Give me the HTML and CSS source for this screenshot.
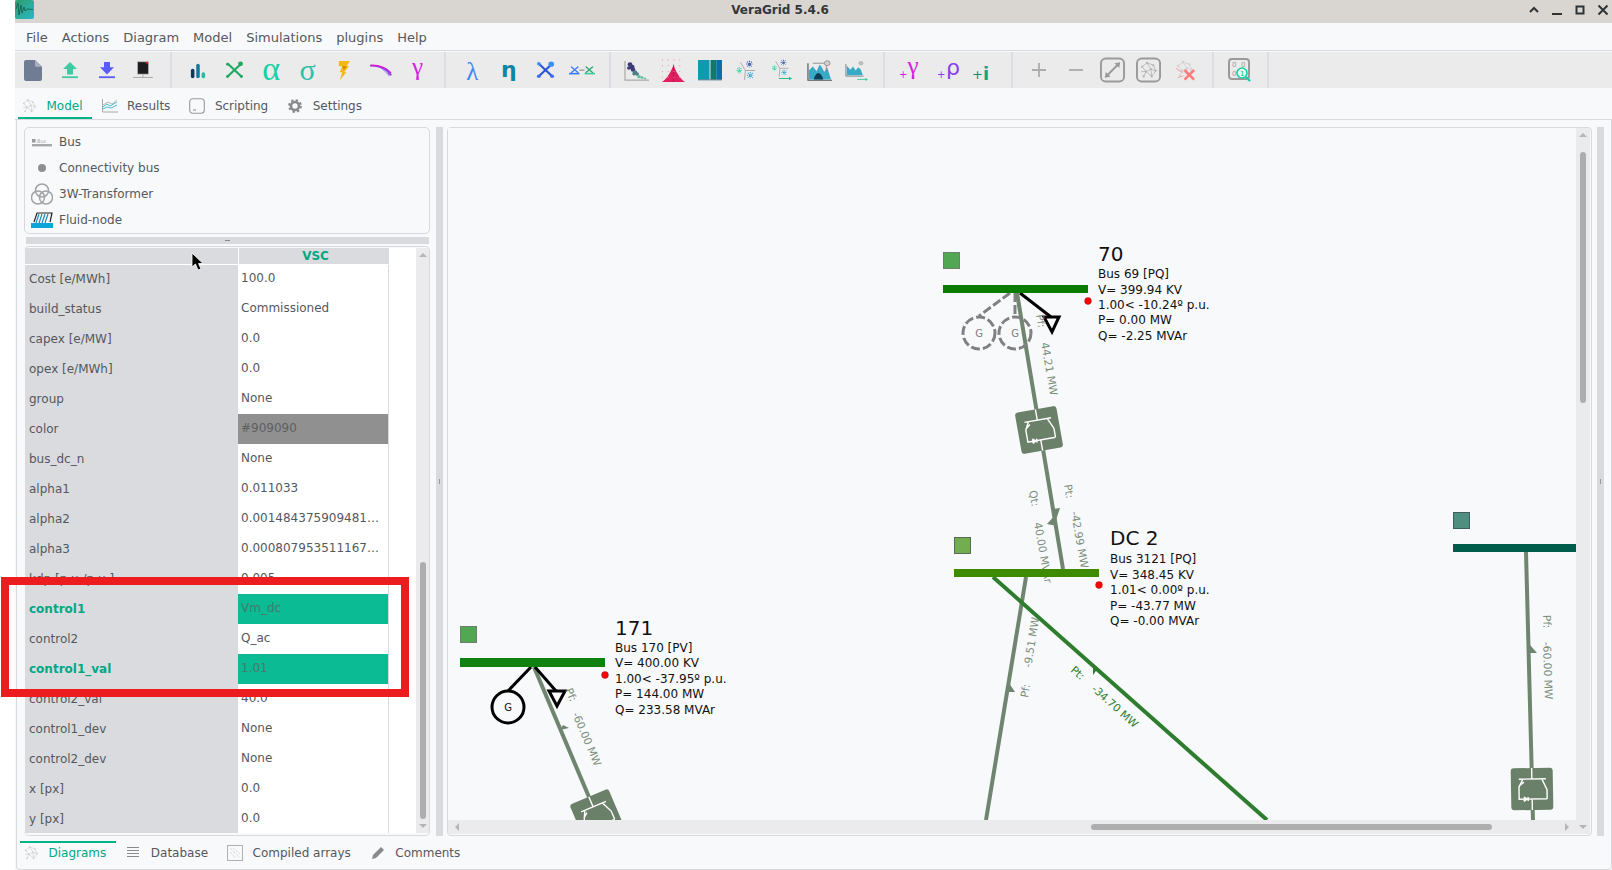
FILE: index.html
```html
<!DOCTYPE html>
<html lang="en">
<head>
    <meta charset="UTF-8">
    <title>VeraGrid 5.4.6</title>
    <link rel="stylesheet" href="styles.css">
</head>
<body>
    <svg class="defs" width="0" height="0">
        <defs>
            <symbol id="net" viewBox="0 0 24 24">
                <g fill="none" stroke="currentColor" stroke-width="1">
                    <path d="M4 8 10 3 18 6 21 13 15 11 10 3M4 8 9 14 15 11 16 20 9 14 6 20M21 13 16 20M3 14 9 14"/>
                </g>
                <g fill="currentColor">
                    <circle cx="4" cy="8" r="1.3"/><circle cx="10" cy="3" r="1.3"/><circle cx="18" cy="6" r="1.3"/>
                    <circle cx="21" cy="13" r="1.3"/><circle cx="15" cy="11" r="1.3"/><circle cx="9" cy="14" r="1.3"/>
                    <circle cx="16" cy="20" r="1.3"/><circle cx="6" cy="20" r="1.3"/>
                </g>
            </symbol>
            <symbol id="flakes" viewBox="0 0 26 26">
                <path d="M11 13 5 3M11 13 23 13M11 13 10 25" stroke="#9a9a9a" stroke-width="1" fill="none"/>
                <g stroke-width="1.3" stroke-dasharray="1.5 1" fill="none">
                    <path d="M12 5h8M16 1v8M13 2l6 6M19 2l-6 6" stroke="#2f4fa8"/>
                    <path d="M0 13h7M3.500 9v8M1 10l5 6M6 10l-5 6" stroke="#35cfa4"/>
                    <path d="M13 19h8M17 15v8M14 16l6 6M20 16l-6 6" stroke="#1fa6d8"/>
                </g>
            </symbol>
            <g id="vsc">
                <path d="M0-21V-10M-13-10H14M-9-10-13-2V10H15M10-10 15 1V10M0 10V21M-13-3-8-7M-8 8V12M-4 8V12" fill="none" stroke="#fff" stroke-width="1.400"/>
                <path d="M-8 7-4 10-8 13Z" fill="#fff"/>
            </g>
        </defs>
    </svg>

    <div class="window">
        <div class="titlebar">
            <svg class="app-icon" viewBox="0 0 19 19">
                <defs>
                    <linearGradient id="appfill" x1="0" y1="0" x2="1" y2="1">
                        <stop offset="0" stop-color="#2f9f6a"/>
                        <stop offset="1" stop-color="#29b6c6"/>
                    </linearGradient>
                </defs>
                <rect width="19" height="19" rx="2" fill="url(#appfill)"/>
                <path d="M1 9 3 3 4 15 6 5 7 13 9 7 10 11 12 9 18 9.500" fill="none" stroke="#14574a" stroke-width="0.800"/>
            </svg>
            <span class="title">VeraGrid 5.4.6</span>
            <div class="win-buttons">
                <svg viewBox="0 0 12 12"><path d="M2 8 6 4 10 8" fill="none" stroke="#2e3436" stroke-width="2"/></svg>
                <svg viewBox="0 0 12 12"><path d="M1 10H11" stroke="#2e3436" stroke-width="2"/></svg>
                <svg viewBox="0 0 12 12"><rect x="2.500" y="2.500" width="7" height="7" fill="none" stroke="#2e3436" stroke-width="2"/></svg>
                <svg viewBox="0 0 12 12"><path d="M1.500 1.500 10.500 10.500M10.500 1.500 1.500 10.500" stroke="#2e3436" stroke-width="2"/></svg>
            </div>
        </div>

        <div class="menubar">
            <span>File</span><span>Actions</span><span>Diagram</span><span>Model</span><span>Simulations</span><span>plugins</span><span>Help</span>
        </div>

        <div class="toolbar">
            <div class="tool"><svg width="18" height="21" viewBox="0 0 18 22" preserveAspectRatio="none"><path d="M2 0H11L18 7V20A2 2 0 0 1 16 22H2A2 2 0 0 1 0 20V2A2 2 0 0 1 2 0Z" fill="#707c93"/><path d="M11 0 18 7H12A1 1 0 0 1 11 6Z" fill="#a9b1c0"/></svg></div>
            <div class="tool"><svg width="16" height="18" viewBox="0 0 16 20" preserveAspectRatio="none"><path d="M8 1 15 9H11V15H5V9H1Z" fill="#3fcaa4"/><rect y="17" width="16" height="2" fill="#3fcaa4"/></svg></div>
            <div class="tool"><svg width="16" height="18" viewBox="0 0 16 20" preserveAspectRatio="none"><path d="M5 1H11V7H15L8 15 1 7H5Z" fill="#5a5cf8"/><rect y="17" width="16" height="2" fill="#5a5cf8"/></svg></div>
            <div class="tool"><svg width="20" height="18" viewBox="0 0 22 22" preserveAspectRatio="none"><rect x="5" y="1" width="12" height="15" fill="#1d1d1f" stroke="#b5b5b5" stroke-width="0.800"/><rect x="14" y="1" width="2.500" height="2" fill="#d9342b"/><path d="M11 16V20" stroke="#aaa"/><rect y="19.500" width="22" height="1.200" fill="#aaa"/></svg></div>
            <div class="sep"></div>
            <div class="tool"><svg width="16" height="17" viewBox="0 0 18 20" preserveAspectRatio="none"><rect x="1" y="8" width="4" height="11" rx="2" fill="#0d3a5c"/><rect x="7" y="2" width="4" height="17" rx="2" fill="#16789e"/><rect x="13" y="12" width="4" height="7" rx="2" fill="#2db89b"/></svg></div>
            <div class="tool"><svg width="19" height="18" viewBox="0 0 22 22" preserveAspectRatio="none"><path d="M3 3 19 19M19 3 3 19" stroke="#1fa860" stroke-width="2.400"/><circle cx="18" cy="3.500" r="2.800" fill="#1fa860"/><circle cx="3" cy="4" r="1.800" fill="#1fa860"/><circle cx="3" cy="19" r="1.800" fill="#1fa860"/><circle cx="19" cy="19" r="1.800" fill="#1fa860"/></svg></div>
            <div class="tool glyph alpha">α</div>
            <div class="tool glyph sigma">σ</div>
            <div class="tool"><svg width="12" height="19" viewBox="0 0 14 22" preserveAspectRatio="none"><path d="M1 0H14L10 6H13L7 13H10L2 22 5 13H2L5 6H1Z" fill="#f5b80f"/><path d="M5 6H10L7 10Z" fill="#c98a00"/></svg></div>
            <div class="tool"><svg width="23" height="13" viewBox="0 0 24 16" preserveAspectRatio="none"><path d="M1 2C9 2 18 4 23 14" fill="none" stroke="#a23ce6" stroke-width="2.400"/><path d="M2 1.500C10 1 17 4 23 11" fill="none" stroke="#e318c9" stroke-width="1.600"/><path d="M12 4 20 13M15 4 23 12M18 5 21 15" stroke="#6d4cf0" stroke-width="0.700"/></svg></div>
            <div class="tool glyph gamma">γ</div>
            <div class="sep"></div>
            <div class="tool glyph lambda">λ</div>
            <div class="tool glyph eta">η</div>
            <div class="tool"><svg width="19" height="18" viewBox="0 0 20 20" preserveAspectRatio="none"><path d="M3 3 17 17M17 3 3 17" stroke="#2b55d9" stroke-width="2.200"/><circle cx="16" cy="3.500" r="3" fill="#3d8ef2"/><circle cx="3" cy="3" r="2" fill="#3d8ef2"/><circle cx="3" cy="17" r="2" fill="#3d6cf2"/><circle cx="17" cy="17" r="2" fill="#3d6cf2"/></svg></div>
            <div class="tool"><svg width="26" height="11" viewBox="0 0 25 14" preserveAspectRatio="none"><path d="M2 2 9 10M9 2 2 10" stroke="#3d78f0" stroke-width="1.400"/><path d="M16 2 23 10M23 2 16 10" stroke="#1fa868" stroke-width="1.400"/><path d="M0 11H10" stroke="#3d78f0" stroke-width="2"/><path d="M15 11H25" stroke="#3fcaa4" stroke-width="2"/><path d="M10 6.500H15" stroke="#666" stroke-width="1"/></svg></div>
            <div class="sep"></div>
            <div class="tool"><svg width="25" height="21" viewBox="0 0 25 24" preserveAspectRatio="none"><path d="M1 1V23H25" fill="none" stroke="#a9a9a9" stroke-width="1.200"/><g fill="#3c3a78"><circle cx="6" cy="5" r="2.400"/><circle cx="8" cy="8" r="2.600"/><circle cx="5" cy="9" r="2"/><circle cx="9" cy="11" r="2.300"/></g><g fill="#4b7f88"><circle cx="11" cy="14" r="2.200"/><circle cx="13" cy="16" r="2"/><circle cx="10" cy="16" r="1.700"/></g><g fill="#5bc2a0"><circle cx="15" cy="19" r="1.800"/><circle cx="18" cy="20" r="1.500"/><circle cx="21" cy="21" r="1.100"/></g></svg></div>
            <div class="tool"><svg width="25" height="25" viewBox="0 0 26 26"><path d="M13 7C15 13 19 21 25 25H1C7 21 11 13 13 7Z" fill="#e21f5e"/><path d="M13 7V25" stroke="#b5184a"/><g fill="none" stroke="#ee8aa8" stroke-dasharray="1 5"><path d="M1 2H25"/><path d="M1 8H25"/><path d="M1 14H25"/><path d="M1 20H25"/></g></svg></div>
            <div class="tool"><svg width="24" height="21" viewBox="0 0 25 24" preserveAspectRatio="none"><rect width="12" height="23" fill="#0d9bb2"/><rect x="13" width="6" height="23" fill="#0e7a68"/><rect x="19" width="6" height="23" fill="#0b6ea8"/><rect y="22" width="25" height="1.200" fill="#6a8a98"/></svg></div>
            <div class="tool"><svg width="22" height="21"><use href="#flakes" width="22" height="21"/></svg></div>
            <div class="tool"><svg width="22" height="22" viewBox="0 0 26 26"><use href="#flakes" width="22" height="22"/><path d="M8 23H20" stroke="#2fb88f" stroke-width="1.200"/><path d="M20 21 24 23 20 25Z" fill="#2fb88f"/></svg></div>
            <div class="tool"><svg width="25" height="21" viewBox="0 0 26 26" preserveAspectRatio="none"><path d="M1 4V25H26" fill="none" stroke="#555" stroke-width="1.200"/><path d="M2 24V13L6 8 10 14 13 6 15 8 18 15 21 9 25 24Z" fill="#38a9c6"/><path d="M7 24C9 14 14 13 17 24Z" fill="#0c3d55"/><path d="M6 4H20V14" fill="none" stroke="#888"/><circle cx="21" cy="4" r="3" fill="#d0d0d0" stroke="#8f8f8f"/></svg></div>
            <div class="tool"><svg width="23" height="21" viewBox="0 0 26 26" preserveAspectRatio="none"><path d="M1 5V20H21" fill="none" stroke="#777"/><path d="M2 19V7L6 12 9 8 12 13 15 9 18 12 20 19Z" fill="#38a9c6"/><circle cx="18" cy="4" r="2.800" fill="#bdbdbd"/><path d="M14 24H24" stroke="#3fcaa4" stroke-width="1.200"/><path d="M23 22 26 24 23 26Z" fill="#3fcaa4"/></svg></div>
            <div class="sep"></div>
            <div class="tool"><svg width="28" height="36"><text class="pg-gamma-plus" x="2" y="26">+</text><text class="pg-gamma" x="10.500" y="22">γ</text></svg></div>
            <div class="tool"><svg width="28" height="36"><text class="pg-rho-plus" x="3" y="26">+</text><text class="pg-rho" x="12" y="23">ρ</text></svg></div>
            <div class="tool"><svg width="28" height="36"><text class="pg-i-plus" x="2" y="27">+</text><text class="pg-i" x="13" y="28">i</text></svg></div>
            <div class="sep"></div>
            <div class="tool"><svg width="14" height="14" viewBox="0 0 14 14"><path d="M7 0V14M0 7H14" stroke="#acacac" stroke-width="1.800"/></svg></div>
            <div class="tool"><svg width="14" height="14" viewBox="0 0 14 14"><path d="M0 7H14" stroke="#acacac" stroke-width="1.800"/></svg></div>
            <div class="tool"><svg width="25" height="26" viewBox="0 0 26 26"><rect x="1" y="1" width="24" height="24" rx="5" fill="none" stroke="#9a9a9a" stroke-width="2"/><path d="M7 19 19 7" stroke="#9a9a9a" stroke-width="2"/><path d="M5 21 11 20 6 15ZM21 5 15 6 20 11Z" fill="#9a9a9a"/></svg></div>
            <div class="tool"><svg class="net-box" width="25" height="26" viewBox="0 0 26 26"><rect x="1" y="1" width="24" height="24" rx="5" fill="none" stroke="#9a9a9a" stroke-width="2"/><use href="#net" x="3" y="3" width="20" height="20"/></svg></div>
            <div class="tool"><svg class="net-pale" width="21" height="22" viewBox="0 0 22 22"><use href="#net" width="20" height="20"/><path d="M10 11 20 21M20 11 10 21" stroke="#ff7b7b" stroke-width="2.600"/><path d="M1 9 8 14M3 19 9 17" stroke="#f6a0a0"/></svg></div>
            <div class="sep"></div>
            <div class="tool"><svg width="24" height="24" viewBox="0 0 24 24"><rect x="1" y="1" width="20" height="20" rx="3" fill="none" stroke="#9a9a9a" stroke-width="2"/><text class="mini" x="4" y="9">0</text><text class="mini" x="13" y="9">0</text><text class="mini" x="4" y="18">0</text><circle cx="14" cy="15" r="5" fill="#e6f8f2" stroke="#14cfa6" stroke-width="1.600"/><text class="mini mini-green" x="12" y="18">1</text><path d="M18 19 22 23" stroke="#14cfa6" stroke-width="2.400"/></svg></div>
            <div class="sep"></div>
        </div>

        <div class="tabs tabs-top">
            <div class="tab active"><svg class="tab-icon net-pale" width="16" height="16"><use href="#net"/></svg>Model</div>
            <div class="tab"><svg class="tab-icon" width="16" height="16" viewBox="0 0 16 16"><path d="M.500 1V14H16" fill="none" stroke="#a9a9a9"/><path d="M1 9 5 6 8 8 15 4M1 11 5 9 9 10 15 7" fill="none" stroke="#45bcd0"/><path d="M1 7 6 4 10 6 15 2" fill="none" stroke="#9a9a9a" stroke-width="0.700"/></svg>Results</div>
            <div class="tab"><svg class="tab-icon" width="16" height="16" viewBox="0 0 16 16"><rect x="0.700" y="0.700" width="14.600" height="14.600" rx="3" fill="none" stroke="#9a9a9a" stroke-width="1.100"/><path d="M4 12H7" stroke="#888"/></svg>Scripting</div>
            <div class="tab"><svg class="tab-icon" width="14" height="14" viewBox="0 0 14 14"><circle cx="7" cy="7" r="4" fill="none" stroke="#8a8a8a" stroke-width="2.600"/><circle cx="7" cy="7" r="5.800" fill="none" stroke="#8a8a8a" stroke-width="2.200" stroke-dasharray="2.300 2.250"/></svg>Settings</div>
        </div>

        <div class="panel">
            <div class="panel-body">
                <div class="side">
                    <div class="palette">
                        <div class="palette-row">
                            <span class="palette-icon"><svg width="20" height="12" viewBox="0 0 20 12"><rect x="0" y="3" width="3.500" height="3.500" fill="#9a9a9a"/><text class="mini-bus" x="5" y="6.500">Bus</text><rect y="8" width="20" height="2.400" fill="#a9a9a9"/></svg></span>Bus
                        </div>
                        <div class="palette-row">
                            <span class="palette-icon"><svg width="8" height="8"><circle cx="4" cy="4" r="4" fill="#8f8f8f"/></svg></span>Connectivity bus
                        </div>
                        <div class="palette-row">
                            <span class="palette-icon"><svg width="22" height="22" viewBox="0 0 22 22"><g fill="none" stroke="#a3a3a3" stroke-width="1.500"><circle cx="11" cy="7.500" r="6.500"/><circle cx="7" cy="14.500" r="6.500"/><circle cx="15" cy="14.500" r="6.500"/></g></svg></span>3W-Transformer
                        </div>
                        <div class="palette-row">
                            <span class="palette-icon"><svg width="22" height="16" viewBox="0 0 22 16"><path d="M3 10 6 1H21L19 10" fill="none" stroke="#222" stroke-width="1.200"/><path d="M8 2 5 11M11 2 8 11M14 2 11 11M17 2 14 11" stroke="#1b8ab5" stroke-width="1.200"/><rect y="11" width="22" height="5" fill="#0ba5d8"/></svg></span>Fluid-node
                        </div>
                    </div>
                    <div class="h-split"><span></span></div>
                    <div class="props">
                        <div class="props-grid">
                            <div class="prop-head"><div class="k"></div><div class="v">VSC</div></div>
                            <div class="prop-row"><div class="k">Cost [e/MWh]</div><div class="v">100.0</div></div>
                            <div class="prop-row"><div class="k">build_status</div><div class="v">Commissioned</div></div>
                            <div class="prop-row"><div class="k">capex [e/MW]</div><div class="v">0.0</div></div>
                            <div class="prop-row"><div class="k">opex [e/MWh]</div><div class="v">0.0</div></div>
                            <div class="prop-row"><div class="k">group</div><div class="v">None</div></div>
                            <div class="prop-row"><div class="k">color</div><div class="v swatch">#909090</div></div>
                            <div class="prop-row"><div class="k">bus_dc_n</div><div class="v">None</div></div>
                            <div class="prop-row"><div class="k">alpha1</div><div class="v">0.011033</div></div>
                            <div class="prop-row"><div class="k">alpha2</div><div class="v">0.001484375909481…</div></div>
                            <div class="prop-row"><div class="k">alpha3</div><div class="v">0.000807953511167…</div></div>
                            <div class="prop-row"><div class="k">kdp [p.u./p.u.]</div><div class="v">0.005</div></div>
                            <div class="prop-row hot"><div class="k">control1</div><div class="v">Vm_dc</div></div>
                            <div class="prop-row"><div class="k">control2</div><div class="v">Q_ac</div></div>
                            <div class="prop-row hot"><div class="k">control1_val</div><div class="v">1.01</div></div>
                            <div class="prop-row"><div class="k">control2_val</div><div class="v">40.0</div></div>
                            <div class="prop-row"><div class="k">control1_dev</div><div class="v">None</div></div>
                            <div class="prop-row"><div class="k">control2_dev</div><div class="v">None</div></div>
                            <div class="prop-row"><div class="k">x [px]</div><div class="v">0.0</div></div>
                            <div class="prop-row"><div class="k">y [px]</div><div class="v">0.0</div></div>
                        </div>
                        <div class="vbar props-bar">
                            <span class="arrow-up"></span>
                            <span class="thumb"></span>
                            <span class="arrow-down"></span>
                        </div>
                    </div>
                </div>

                <div class="v-split"><span></span></div>

                <div class="canvas-frame">
                    <div class="canvas-top">
                        <svg class="canvas" width="1128" height="692" viewBox="448 128 1128 692">
                            <!-- bus 70 -->
                            <path class="vsc-line" d="M1017 293 1063 569"/>
                            <path class="dash" d="M1010 293 979 316M1015 293V316"/>
                            <circle class="dash" cx="979" cy="333" r="16"/>
                            <circle class="dash" cx="1015" cy="333" r="16"/>
                            <text class="g-label gray" x="979" y="337">G</text>
                            <text class="g-label gray" x="1015" y="337">G</text>
                            <path class="load" d="M1020 293 1051 317"/>
                            <path class="load" d="M1044 317H1059L1052 332Z"/>
                            <text class="flow" transform="rotate(80 1036 315)" x="1036" y="315">Pf:</text>
                            <text class="flow" transform="rotate(80 1041 343)" x="1041" y="343">44.21 MW</text>
                            <g transform="translate(1039 430) rotate(-10)">
                                <rect class="block" x="-21" y="-21" width="42" height="42" rx="3"/>
                                <use href="#vsc"/>
                            </g>
                            <rect class="sq sq-70" x="943.500" y="252.500" width="16" height="16"/>
                            <rect x="943" y="285" width="145" height="8" fill="#0a7d00"/>
                            <circle class="dot" cx="1088" cy="301" r="3.400"/>
                            <text class="bus-name" x="1098" y="261">70</text>
                            <text class="bus-info" x="1098"><tspan x="1098" y="278">Bus 69 [PQ]</tspan><tspan x="1098" y="294">V= 399.94 KV</tspan><tspan x="1098" y="309">1.00&lt; -10.24º p.u.</tspan><tspan x="1098" y="324">P= 0.00 MW</tspan><tspan x="1098" y="340">Q= -2.25 MVAr</tspan></text>

                            <!-- DC 2 -->
                            <polygon class="arrow-gray" points="1053,509 1060,508 1056,520"/>
                            <polygon class="arrow-gray" points="1056,514 1057,526 1047,524"/>
                            <text class="flow" transform="rotate(80 1064 485)" x="1064" y="485">Pt:</text>
                            <text class="flow" transform="rotate(80 1071 512)" x="1071" y="512">-42.99 MW</text>
                            <text class="flow" transform="rotate(80 1029 491)" x="1029" y="491">Qt:</text>
                            <text class="flow" transform="rotate(80 1034 523)" x="1034" y="523">40.00 MVAr</text>
                            <path class="vsc-line" d="M1026 577 986 820"/>
                            <path class="ac-line" d="M993 577 1267 820"/>
                            <polygon class="arrow-gray" points="1009,683 1015,692 1007,692"/>
                            <polygon class="arrow-green" points="1093,675 1093,665 1098,668"/>
                            <text class="flow" transform="rotate(-80.600 1031 668)" x="1031" y="668">-9.51 MW</text>
                            <text class="flow" transform="rotate(-80.600 1028 698)" x="1028" y="698">Pf:</text>
                            <text class="flow flow-green" transform="rotate(41.600 1070 671)" x="1070" y="671">Pt:</text>
                            <text class="flow flow-green" transform="rotate(41.600 1091 690)" x="1091" y="690">-34.70 MW</text>
                            <rect class="sq sq-dc" x="954.500" y="537.500" width="16" height="16"/>
                            <rect x="954" y="569" width="145" height="8" fill="#3e8a00"/>
                            <circle class="dot" cx="1099" cy="585" r="3.400"/>
                            <text class="bus-name" x="1110" y="545">DC 2</text>
                            <text class="bus-info"><tspan x="1110" y="563">Bus 3121 [PQ]</tspan><tspan x="1110" y="579">V= 348.45 KV</tspan><tspan x="1110" y="594">1.01&lt; 0.00º p.u.</tspan><tspan x="1110" y="610">P= -43.77 MW</tspan><tspan x="1110" y="625">Q= -0.00 MVAr</tspan></text>

                            <!-- bus 171 -->
                            <path class="vsc-line" d="M534 667 597 816"/>
                            <path class="load" d="M531 667 508 691"/>
                            <circle class="load" cx="508" cy="707" r="16"/>
                            <text class="g-label" x="508" y="711">G</text>
                            <path class="load" d="M535 667 556 691"/>
                            <path class="load" d="M549 691H565L557 706Z"/>
                            <polygon class="arrow-gray" points="560,730 569,728 563,725"/>
                            <text class="flow" transform="rotate(66.700 565 690)" x="565" y="690">Pf:</text>
                            <text class="flow" transform="rotate(66.700 572 714)" x="572" y="714">-60.00 MW</text>
                            <g transform="translate(597 816) rotate(-23)">
                                <rect class="block" x="-21" y="-21" width="42" height="42" rx="3"/>
                                <use href="#vsc"/>
                            </g>
                            <rect class="sq sq-70" x="460.500" y="626.500" width="16" height="16"/>
                            <rect x="460" y="658" width="145" height="9" fill="#108010"/>
                            <circle class="dot" cx="605" cy="675" r="3.400"/>
                            <text class="bus-name" x="615" y="635">171</text>
                            <text class="bus-info"><tspan x="615" y="652">Bus 170 [PV]</tspan><tspan x="615" y="667">V= 400.00 KV</tspan><tspan x="615" y="683">1.00&lt; -37.95º p.u.</tspan><tspan x="615" y="698">P= 144.00 MW</tspan><tspan x="615" y="714">Q= 233.58 MVAr</tspan></text>

                            <!-- right bus -->
                            <path class="vsc-line" d="M1526 552 1533 820"/>
                            <polygon class="arrow-gray" points="1530,645 1537,653 1529,653"/>
                            <text class="flow" transform="rotate(88 1543 615)" x="1543" y="615">Pf:</text>
                            <text class="flow" transform="rotate(88 1543 642)" x="1543" y="642">-60.00 MW</text>
                            <g transform="translate(1532 789) rotate(-1)">
                                <rect class="block" x="-21" y="-21" width="42" height="42" rx="3"/>
                                <use href="#vsc"/>
                            </g>
                            <rect class="sq sq-teal" x="1453.500" y="512.500" width="16" height="16"/>
                            <rect x="1453" y="544" width="123" height="8" fill="#005c4b"/>
                        </svg>
                        <div class="vbar canvas-vbar">
                            <span class="arrow-up"></span>
                            <span class="thumb"></span>
                            <span class="arrow-down"></span>
                        </div>
                    </div>
                    <div class="hbar">
                        <span class="arrow-left"></span>
                        <span class="hthumb"></span>
                        <span class="arrow-right"></span>
                    </div>
                </div>

                <div class="v-split v-split-right"><span></span></div>
            </div>

            <div class="tabs tabs-bottom">
                <div class="tab active"><svg class="tab-icon net-pale" width="16" height="16"><use href="#net"/></svg>Diagrams</div>
                <div class="tab"><svg class="tab-icon" width="16" height="14" viewBox="0 0 16 14"><path d="M2 1.500H14M2 4.500H14M2 7.500H14M2 10.500H14" stroke="#8a8a8a" stroke-width="1.200"/></svg>Database</div>
                <div class="tab"><svg class="tab-icon" width="16" height="16" viewBox="0 0 16 16"><rect x="0.500" y="0.500" width="15" height="15" fill="none" stroke="#b0b0b0"/><path d="M3 3 13 13M6 3 13 9M3 7 9 13" stroke="#c8c8c8" stroke-dasharray="1 1"/></svg>Compiled arrays</div>
                <div class="tab"><svg class="tab-icon" width="14" height="14" viewBox="0 0 14 14"><path d="M1 13 2 9 10 1 13 4 5 12Z" fill="#8a8a8a"/></svg>Comments</div>
            </div>
        </div>
    </div>

    <!-- red highlight drawn over the table -->
    <div class="highlight"></div>

    <svg class="cursor" width="14" height="20" viewBox="0 0 14 20">
        <path d="M1 1V15L4.500 12 7 18 10 17 7.500 11.500H12Z" fill="#000" stroke="#fff" stroke-width="0.800"/>
    </svg>
</body>
</html>
```

FILE: styles.css
```css
*{
    box-sizing: border-box;
}
html, body{
    margin: 0;
    height: 100%;
    overflow: hidden;
}
body{
    position: relative;
    background-color: #fff;
    font-family: "DejaVu Sans", sans-serif;
    font-size: 12px;
    color: #55585c;
}
.defs{
    position: absolute;
}
.window{
    margin-left: 15px;
    height: 870px;
    display: flex;
    flex-direction: column;
    background-color: #f8f9fb;
}

/* title bar */
.titlebar{
    height: 23px;
    flex: none;
    display: flex;
    align-items: center;
    justify-content: center;
    position: relative;
    padding-bottom: 3px;
    background-color: #d9d5d1;
}
.app-icon{
    position: absolute;
    left: 0;
    top: 0;
    width: 19px;
    height: 19px;
}
.title{
    font-size: 12px;
    font-weight: bold;
    color: #33373a;
    margin-left: -67px;
}
.win-buttons{
    position: absolute;
    right: 3px;
    top: 4px;
    display: flex;
    gap: 11px;
}
.win-buttons svg{
    width: 12px;
    height: 12px;
}

/* menu */
.menubar{
    height: 28px;
    flex: none;
    display: flex;
    align-items: center;
    gap: 14px;
    padding: 1px 0 0 11px;
    font-size: 13px;
    border-bottom: 1px solid #d8d9dd;
}

/* toolbar */
.toolbar{
    height: 36px;
    flex: none;
    margin-top: 1px;
    display: flex;
    align-items: center;
    background-color: #ebebeb;
}
.tool{
    width: 36.63px;
    height: 36px;
    flex: none;
    display: flex;
    align-items: center;
    justify-content: center;
}
.sep{
    width: 2px;
    height: 36px;
    flex: none;
    margin: 0 7.5px 0 8.5px;
    background-color: #dcdde0;
}
.glyph{
    font-family: "Liberation Serif", serif;
    line-height: 1;
}
.alpha{ color: #14d2a8; font-size: 34px; padding-bottom: 3px; }
.sigma{ color: #2cc0a6; font-size: 30px; padding-bottom: 1px; }
.gamma{ color: #d81ce6; font-size: 25px; padding-bottom: 8px; }
.lambda{ color: #3f87f5; font-size: 25px; padding-top: 3px; }
.eta{
    color: #0a86a8;
    font-family: "DejaVu Sans", sans-serif;
    font-size: 22px;
    font-weight: bold;
}
.pg-gamma-plus{ font-size: 10px; fill: #d81ce6; }
.pg-gamma{ font-family: "Liberation Serif", serif; font-size: 25px; fill: #d81ce6; }
.pg-rho-plus{ font-size: 10px; fill: #8a3cf0; }
.pg-rho{ font-size: 22px; fill: #8a3cf0; }
.pg-i-plus{ font-size: 13px; fill: #0f8f70; }
.pg-i{ font-size: 18px; font-weight: bold; fill: #10a884; }
.mini{
    font-size: 7px;
    fill: #a0a0a0;
}
.mini-green{
    fill: #14b38f;
}
.mini-bus{
    font-size: 5px;
    fill: #a8a8a8;
}
.net-box{
    color: #b0b0b0;
}
.net-pale{
    color: #cfcfcf;
}

/* tabs */
.tabs{
    display: flex;
    flex: none;
}
.tabs-top{
    height: 32px;
    padding-left: 3px;
    border-bottom: 1px solid #d8d9dd;
}
.tabs-bottom{
    height: 28px;
    padding: 0 0 6px 3px;
}
.tab{
    display: flex;
    align-items: center;
    padding: 0 9.5px;
    gap: 9.5px;
    border: 0 solid transparent;
}
.tab:first-child{
    padding-left: 3px;
}
.tab-icon{
    flex: none;
    width: 16px;
}
.tab.active{
    color: #00a884;
    border-color: #00b38a;
}
.tabs-top .tab{
    padding-top: 7px;
    border-bottom-width: 2px;
}
.tabs-bottom .tab{
    border-top-width: 2px;
}

/* main area */
.panel{
    flex: 1;
    margin-left: 1px;
    min-height: 0;
    display: flex;
    flex-direction: column;
    border: 1px solid #d8d9dd;
    border-top: none;
    border-radius: 0 0 4px 4px;
}
.panel-body{
    height: 721px;
    flex: none;
    display: flex;
    padding: 7px 0 0 7px;
}
.side{
    width: 406px;
    flex: none;
    display: flex;
    flex-direction: column;
    height: 709px;
}
.palette{
    height: 107px;
    flex: none;
    padding-top: 1px;
    border: 1px solid #d8d9dd;
    border-radius: 5px;
}
.palette-row{
    height: 26px;
    display: flex;
    align-items: center;
}
.palette-icon{
    width: 34px;
    flex: none;
    display: flex;
    justify-content: center;
}
.h-split{
    height: 7px;
    flex: none;
    margin: 3px 1px 2px 2px;
    display: flex;
    justify-content: center;
    background-color: #d9dade;
}
.h-split span{
    width: 5px;
    height: 1px;
    margin-top: 3px;
    background-color: #888;
}
.props{
    height: 590px;
    flex: none;
    display: flex;
    padding: 1px 0 2px 1px;
    border: 1px solid #d8d9dd;
    border-left: none;
    border-radius: 5px;
    overflow: hidden;
}
.props-grid{
    width: 391px;
    flex: none;
    background-color: #fff;
    overflow: hidden;
}
.prop-head,
.prop-row{
    display: grid;
    grid-template-columns: 213px 151px;
}
.prop-head{
    height: 17px;
    margin-bottom: -1px;
    position: relative;
    font-weight: bold;
    text-align: center;
    color: #00a884;
}
.prop-head .k,
.prop-head .v{
    line-height: 16px;
    background-color: #dadbdf;
    border-bottom: 1px solid #fff;
    border-right: none;
}
.prop-head .v{
    border-left: 1px solid #fff;
}
.prop-row{
    height: 30px;
}
.k{
    padding-left: 4px;
    line-height: 30px;
    background-color: #dadbdf;
    border-bottom: 1px solid #f4f5f7;
}
.v{
    padding-left: 3px;
    line-height: 28px;
    background-color: #fff;
    border-bottom: 1px solid #d8d9dd;
    border-right: 1px solid #d8d9dd;
    white-space: nowrap;
}
.swatch{
    background-color: #909090;
    color: #5f5f5f;
}
.hot .k{
    font-weight: bold;
    color: #00a884;
}
.hot .v{
    background-color: #0abb93;
    color: #477a6d;
}

/* scroll bars */
.vbar{
    width: 14px;
    flex: none;
    position: relative;
    background-color: #ebebed;
}
.thumb{
    position: absolute;
    left: 4px;
    width: 6px;
    border-radius: 3px;
    background-color: #aeaeae;
}
.props-bar .thumb{
    top: 314px;
    height: 257px;
}
.canvas-vbar .thumb{
    top: 24px;
    height: 251px;
}
.arrow-up,
.arrow-down,
.arrow-left,
.arrow-right{
    position: absolute;
    width: 0;
    height: 0;
    border: 4px solid transparent;
}
.arrow-up{
    top: 1px;
    left: 3px;
    border-bottom-color: #b5b5b5;
}
.arrow-down{
    bottom: 1px;
    left: 3px;
    border-top-color: #b5b5b5;
}
.arrow-left{
    top: 3px;
    left: 3px;
    border-right-color: #b5b5b5;
}
.arrow-right{
    top: 3px;
    right: 3px;
    border-left-color: #b5b5b5;
}
.v-split{
    width: 7px;
    height: 709px;
    flex: none;
    margin: 0 4px 0 6px;
    background-color: #d9dade;
    display: flex;
    align-items: center;
    justify-content: center;
}
.v-split span{
    width: 1px;
    height: 5px;
    background-color: #999;
}
.v-split-right{
    margin: 0 0 0 5px;
}
.canvas-frame{
    width: 1145px;
    height: 709px;
    flex: none;
    display: flex;
    flex-direction: column;
    border: 1px solid #d8d9dd;
    border-radius: 4px;
}
.canvas-top{
    height: 692px;
    flex: none;
    display: flex;
}
.canvas{
    flex: none;
    display: block;
    background-color: #f8f9fb;
}
.hbar{
    height: 14px;
    flex: none;
    width: 1128px;
    position: relative;
    background-color: #ebebed;
}
.hthumb{
    position: absolute;
    left: 643px;
    top: 4px;
    width: 401px;
    height: 6px;
    border-radius: 3px;
    background-color: #aeaeae;
}
.canvas-vbar{
    height: 706px;
}

/* diagram */
.vsc-line{
    fill: none;
    stroke: #6f856f;
    stroke-width: 4;
}
.ac-line{
    fill: none;
    stroke: #2e7d2e;
    stroke-width: 4;
}
.dash{
    fill: none;
    stroke: #808080;
    stroke-width: 3;
    stroke-dasharray: 9 3;
}
.load{
    fill: none;
    stroke: #000;
    stroke-width: 3;
}
.block{
    fill: #6b8068;
}
.sq{
    stroke-width: 1;
}
.sq-70{
    fill: #52a852;
    stroke: #6f7f6f;
}
.sq-dc{
    fill: #72ad50;
    stroke: #5a6a5a;
}
.sq-teal{
    fill: #4f8f80;
    stroke: #3f5f5f;
}
.dot{
    fill: #f00;
    stroke: #8a2020;
    stroke-width: 0.5;
}
.bus-name{
    font-size: 20px;
    fill: #111;
}
.bus-info{
    font-size: 12px;
    fill: #111;
}
.g-label{
    font-size: 10px;
    text-anchor: middle;
    fill: #111;
}
.g-label.gray{
    fill: #808080;
}
.flow{
    font-size: 10.7px;
    fill: #7d8f7d;
}
.flow-green{
    fill: #2e7d2e;
}
.arrow-gray{
    fill: #6f856f;
}
.arrow-green{
    fill: #2e7d2e;
}

/* overlays */
.highlight{
    position: absolute;
    left: 1px;
    top: 577px;
    width: 408px;
    height: 120px;
    border: 8px solid #ec1c1f;
}
.cursor{
    position: absolute;
    left: 191px;
    top: 252px;
}
```
